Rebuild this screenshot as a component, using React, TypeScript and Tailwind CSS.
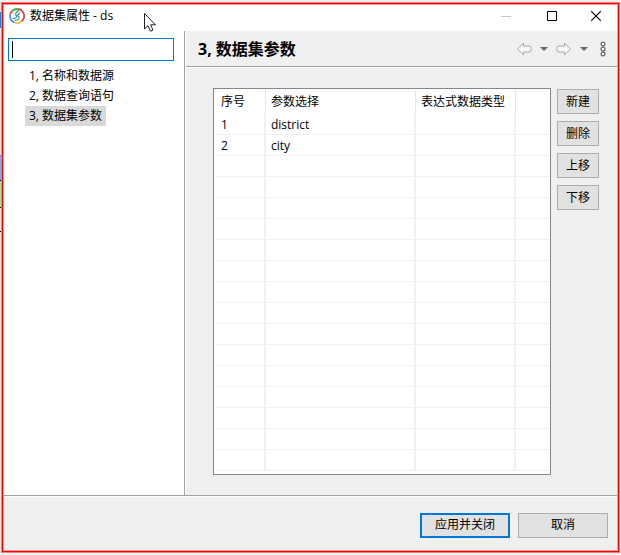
import { useState } from "react";

const pages = ["1, 名称和数据源", "2, 数据查询语句", "3, 数据集参数"];

const params = [
  { id: 1, name: "district", type: "" },
  { id: 2, name: "city", type: "" },
];

const ROW_COUNT = 17;

const actions = ["新建", "删除", "上移", "下移"];

function AppLogo() {
  return (
    <svg viewBox="0 0 16 16" className="size-4" fill="none" aria-hidden="true">
      <path d="M3.2 3A7 7 0 0 1 8.5 1" stroke="#3aa757" strokeWidth="1.8" />
      <path d="M8.5 1A7 7 0 0 1 12.5 13.4" stroke="#e8453c" strokeWidth="1.8" />
      <path d="M12.5 13.4A7 7 0 0 1 5.4 14.5" stroke="#f9bb2d" strokeWidth="1.8" />
      <path d="M5.4 14.5A7 7 0 0 1 1.2 6.5" stroke="#4688f1" strokeWidth="1.8" />
      <path d="M1.2 6.5A7 7 0 0 1 3.2 3" stroke="#e8453c" strokeWidth="1.8" />
      <path d="M10.2 2.4C7.6 3.6 6 5.4 6.8 6.8C7.6 8 10.4 7.8 10.2 9.8C10 11.6 8 12.4 5.6 12.4" stroke="#3aa757" strokeWidth="1.2" />
      <path d="M11.4 4.4C9.6 5.4 8.6 7.4 7.2 9.4C6.2 10.6 5 10.8 3.8 10.4" stroke="#4688f1" strokeWidth="1.2" />
    </svg>
  );
}

function NavArrow({ flip = false }: { flip?: boolean }) {
  return (
    <svg viewBox="0 0 16 14" className={flip ? "h-3.5 w-4 -scale-x-100" : "h-3.5 w-4"} aria-hidden="true">
      <path d="M1.5 7L7.5 1.2V4H14L15 5V9L14 10H7.5V12.8Z" fill="#f7f7f7" stroke="#a9a9a9" strokeLinejoin="round" />
    </svg>
  );
}

function Caret() {
  return (
    <svg viewBox="0 0 8 4" className="h-1 w-2" aria-hidden="true">
      <path d="M0 0H8L4 4Z" fill="#6b6b6b" />
    </svg>
  );
}

export default function App() {
  const [filter, setFilter] = useState("");
  const [active, setActive] = useState(2);

  return (
    <div className="flex min-h-screen bg-[#f0f0f0] pt-0.5 pr-px pb-0.5 font-['Open_Sans','Noto_Sans_CJK_SC',sans-serif] text-xs text-black">
      {/* Sliver of the window behind */}
      <div className="flex w-px flex-col bg-[#e8e8e8]">
        <div className="h-2.5" />
        <div className="h-4 bg-[#1683d8]" />
        <div className="h-32 border-b border-gray-500" />
        <div className="h-6 bg-[#7faaf0]" />
        <div className="h-7 border-y border-black bg-[#a8e6a0]" />
        <div className="h-6 border-b border-black" />
      </div>

      <div className="flex min-w-0 flex-1 flex-col border border-[#ff7a7a]">
        <div className="flex flex-1 flex-col border border-[#ff0000]">
          <div className="flex flex-1 flex-col border border-[#ff9a9a] bg-[#f0f0f0]">
            {/* Title bar */}
            <header className="relative flex h-[26px] items-center bg-white pb-1 pl-[5px]">
              <AppLogo />
              <h1 className="pl-[5px] leading-5">数据集属性 - ds</h1>
              <svg viewBox="0 0 12 19" className="absolute top-2 left-[140px] h-[19px] w-3" aria-hidden="true">
                <path d="M.5 .5V16L4 12.7L6.5 18.2L9 17.1L6.6 11.8H11.5Z" fill="#fff" stroke="#20202c" />
              </svg>
              <div className="ml-auto flex">
                <button aria-label="最小化" className="flex h-5 w-[46px] items-center justify-center">
                  <svg viewBox="0 0 10 10" className="size-2.5"><path d="M0 5.5H10" stroke="#c8c8c8" /></svg>
                </button>
                <button aria-label="最大化" className="flex h-5 w-[46px] items-center justify-center">
                  <svg viewBox="0 0 10 10" className="size-2.5" fill="none"><path d="M.5 .5H9.5V9.5H.5Z" stroke="#000" /></svg>
                </button>
                <button aria-label="关闭" className="flex h-5 w-[42px] items-center justify-center">
                  <svg viewBox="0 0 10 10" className="size-2.5"><path d="M0 0L10 10M10 0L0 10" stroke="#000" strokeWidth="1.1" /></svg>
                </button>
              </div>
            </header>

            <div className="flex flex-1">
              {/* Sidebar */}
              <aside className="w-[181px] shrink-0 border-r border-[#a0a0a0] bg-white pt-[7px] pl-1">
                <div className="relative mr-2.5">
                  <input
                    aria-label="筛选"
                    value={filter}
                    onChange={(e) => setFilter(e.target.value)}
                    className="block h-[23px] w-full border border-[#0078d7] bg-white px-1 caret-transparent outline-none"
                  />
                  <span className="pointer-events-none absolute top-[3px] left-1 h-[17px] w-px bg-black" />
                </div>
                <nav className="flex flex-col items-start pt-[5px] pl-[17px]">
                  {pages.map((page, i) => (
                    <a
                      key={page}
                      href="#"
                      onClick={() => setActive(i)}
                      className={i === active ? "h-5 bg-[#d9d9d9] px-1 leading-5" : "h-5 px-1 leading-5"}
                    >
                      {page}
                    </a>
                  ))}
                </nav>
              </aside>

              {/* Page */}
              <main className="flex min-w-0 flex-1 flex-col border-l border-white">
                <div className="flex h-9 shrink-0 items-center border-b border-[#a0a0a0] pr-[11px] pl-3">
                  <h2 className="text-base leading-6 font-bold">3, 数据集参数</h2>
                  <div className="ml-auto flex items-center">
                    <button aria-label="后退"><NavArrow /></button>
                    <button aria-label="后退历史" className="flex h-4 w-6 items-center justify-center"><Caret /></button>
                    <button aria-label="前进"><NavArrow flip /></button>
                    <button aria-label="前进历史" className="flex h-4 w-6 items-center justify-center"><Caret /></button>
                    <button aria-label="菜单" className="ml-1">
                      <svg viewBox="0 0 6 16" className="h-4 w-1.5" fill="#fff" stroke="#666" strokeWidth="1.2">
                        <circle cx="3" cy="3" r="1.9" />
                        <circle cx="3" cy="8" r="1.9" />
                        <circle cx="3" cy="13" r="1.9" />
                      </svg>
                    </button>
                  </div>
                </div>

                <div className="flex flex-1 items-start gap-1.5 border-t border-white pt-5 pr-[18px] pb-5 pl-[27px]">
                  <div className="min-w-0 flex-1 border border-[#828790] bg-white p-px pb-[3px]">
                    <table className="w-full table-fixed border-separate border-spacing-0 text-left">
                      <colgroup>
                        <col className="w-[51px]" />
                        <col className="w-[150px]" />
                        <col className="w-[100px]" />
                        <col />
                      </colgroup>
                      <thead>
                        <tr className="h-6">
                          <th className="border-r border-[#e5e5e5] p-0 pl-1.5 font-normal">序号</th>
                          <th className="border-r border-[#e5e5e5] p-0 pl-[5px] font-normal">参数选择</th>
                          <th className="border-r border-[#e5e5e5] p-0 pl-[5px] font-normal">表达式数据类型</th>
                          <th className="p-0" />
                        </tr>
                      </thead>
                      <tbody>
                        {Array.from({ length: ROW_COUNT }, (_, i) => {
                          const row = params[i];
                          return (
                            <tr key={i} className="h-[21px]">
                              <td className="border-r-2 border-b border-r-[#eaf1fb] border-b-[#f0f0f0] p-0 pt-0.5 pl-1.5">{row?.id}</td>
                              <td className="border-r-2 border-b border-r-[#eaf1fb] border-b-[#f0f0f0] p-0 pt-0.5 pl-[5px]">{row?.name}</td>
                              <td className="border-r-2 border-b border-r-[#eaf1fb] border-b-[#f0f0f0] p-0 pt-0.5 pl-[5px]">{row?.type}</td>
                              <td className="border-b border-[#f0f0f0] p-0" />
                            </tr>
                          );
                        })}
                      </tbody>
                    </table>
                  </div>
                  <div className="flex flex-col gap-[7px] pt-px">
                    {actions.map((label) => (
                      <button key={label} className="h-[25px] w-[42px] border border-[#adadad] bg-[#e1e1e1] leading-5">
                        {label}
                      </button>
                    ))}
                  </div>
                </div>
              </main>
            </div>

            {/* Footer */}
            <footer className="flex h-[55px] shrink-0 items-center justify-end gap-2 border-t border-[#a0a0a0] pt-1 pr-[9px] shadow-[inset_0_1px_0_#fff]">
              <button className="h-[25px] w-[90px] border-2 border-[#0078d7] bg-[#e1e1e1] leading-5">应用并关闭</button>
              <button className="h-[25px] w-[90px] border border-[#adadad] bg-[#e1e1e1] leading-5">取消</button>
            </footer>
          </div>
        </div>
      </div>
    </div>
  );
}
